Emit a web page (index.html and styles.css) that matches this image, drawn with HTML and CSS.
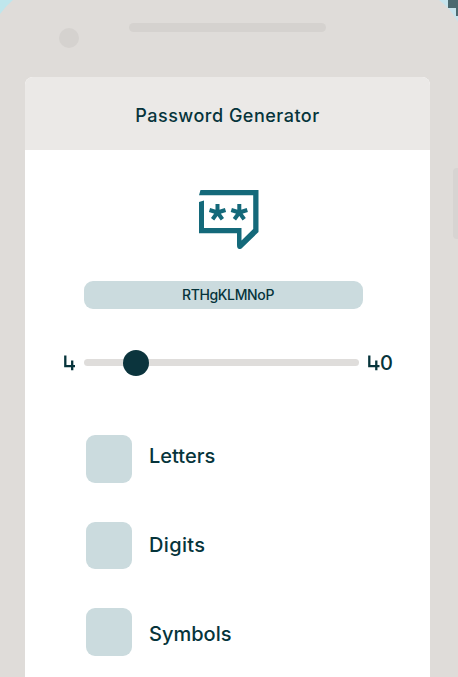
FILE: index.html
```html
<!DOCTYPE html>
<html lang="en">
<head>
<meta charset="utf-8">
<title>Password Generator</title>
<link rel="stylesheet" href="styles.css">
</head>
<body>
<div class="phone">
  <svg class="corners" viewBox="0 0 458 24" aria-hidden="true">
    <path fill="#bfe6ec" d="M0 0H13Q6 6 0 14Z"/>
    <path fill="#c7e4ec" d="M439 0H458V22Q450 8 439 0Z"/>
    <path fill="#4b696f" d="M448 0H458V16H456V8H448Z"/>
  </svg>
  <span class="side-button"></span>
  <div class="bezel">
    <span class="camera"></span>
    <span class="speaker"></span>
  </div>
  <main class="screen">
    <header class="header"><h1 class="title">Password Generator</h1></header>
    <svg class="logo" viewBox="0 0 60 60" aria-hidden="true">
      <path fill="#14697a" d="M1.5 0H59.5V42L42.5 58.5Q38 60.5 38 55V43.3H0V12L5 10.5V38H42.5V50.5L54.2 39V5.3H0Z"/>
      <g fill="none" stroke="#14697a" stroke-width="4">
        <path d="M18.5 22.5V14M18.5 22.5L26.5 20M18.5 22.5L23.4 29.2M18.5 22.5L13.6 29.2M18.5 22.5L10.5 20"/>
        <path d="M40.3 22.5V14M40.3 22.5L48.3 20M40.3 22.5L45.2 29.2M40.3 22.5L35.4 29.2M40.3 22.5L32.3 20"/>
      </g>
    </svg>
    <div class="password"><span class="password-text">RTHgKLMNoP</span></div>
    <div class="slider">
      <svg class="four" viewBox="0 0 14 20" role="img" aria-label="4"><path d="M3.3 2.5V13.2H13M10.2 7.5V17.3"/></svg>
      <div class="track"><span class="knob"></span></div>
      <div class="max"><svg class="four" viewBox="0 0 14 20" role="img" aria-label="4"><path d="M2.3 2.5V13.2H12.5M9.3 7.5V17.3"/></svg><span class="zero">0</span></div>
    </div>
    <div class="options">
      <div class="option"><span class="box"></span><span class="label letters">Letters</span></div>
      <div class="option"><span class="box"></span><span class="label digits">Digits</span></div>
      <div class="option"><span class="box"></span><span class="label symbols">Symbols</span></div>
    </div>
  </main>
</div>
</body>
</html>
```
FILE: styles.css
```css
* { box-sizing: border-box; }
body {
  margin: 0;
  overflow: hidden;
  color: #06343b;
  font-family: Inter, "Liberation Sans", sans-serif;
  font-weight: 500;
}
.phone {
  position: relative;
  height: 677px;
  overflow: hidden;
  background: #dfdcd9;
}
.corners { position: absolute; top: 0; left: 0; width: 458px; height: 24px; }
.side-button {
  position: absolute;
  top: 168px;
  right: 0;
  width: 5px;
  height: 71px;
  border-radius: 4px 0 0 4px;
  background: #d7d4d2;
}
.bezel { display: flex; height: 77px; padding: 23px 0 0 59px; }
.camera { width: 20px; height: 20px; margin-top: 5px; border-radius: 50%; background: #d5d2cf; }
.speaker { width: 197px; height: 9px; margin-left: 50px; border-radius: 5px; background: #d5d2cf; }
.screen {
  width: 405px;
  height: 600px;
  margin-left: 25px;
  overflow: hidden;
  border-radius: 8px 8px 0 0;
  background: #fff;
}
.header { display: flex; height: 73px; padding-top: 5px; align-items: center; justify-content: center; background: #ebe9e7; }
.title { margin: 0; font-size: 18px; font-weight: 500; line-height: 24px; letter-spacing: 0.5px; white-space: nowrap; }
.logo { display: block; width: 60px; height: 60px; margin: 40px 0 0 174px; }
.password {
  display: flex;
  width: 279px;
  height: 28px;
  margin: 31px 0 0 59px;
  padding: 0 0 2px 9px;
  align-items: center;
  justify-content: center;
  border-radius: 9px;
  background: #cbdbde;
}
.password-text { font-size: 14px; letter-spacing: -0.35px; }
.slider { display: flex; height: 28px; margin: 40px 0 0 37px; align-items: center; }
.four { width: 14px; height: 20px; fill: none; stroke: #06343b; stroke-width: 2.3; }
.track { display: flex; width: 275px; height: 7px; margin: -1px 8px 0; align-items: center; border-radius: 4px; background: #dfdddb; }
.knob { flex: none; width: 26px; height: 26px; margin: 1px 0 0 39px; border-radius: 50%; background: #0b343d; }
.max { display: flex; align-items: center; }
.zero { margin-left: -1px; font-size: 20px; line-height: 24px; }
.options { display: grid; gap: 39px; margin: 58px 0 0 61px; }
.option { display: flex; height: 47.5px; }
.box { width: 46px; height: 47.5px; border-radius: 9px; background: #cbdbde; }
.label { margin: 7px 0 0 17px; font-size: 20px; line-height: 28px; }
.digits { margin-top: 9px; letter-spacing: 0.35px; }
.symbols { margin-top: 12px; }
```
